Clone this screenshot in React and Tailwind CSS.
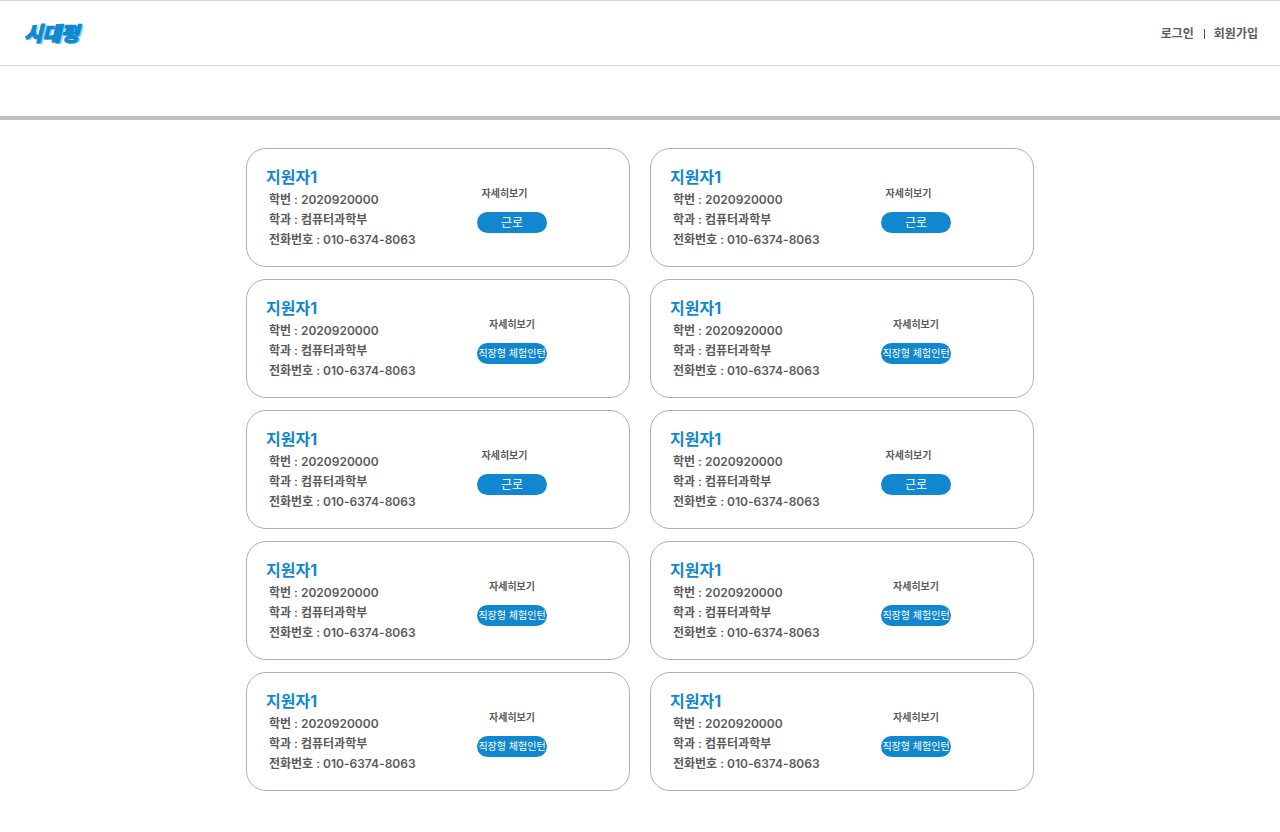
const applicants = [
  "근로",
  "근로",
  "직장형 체험인턴",
  "직장형 체험인턴",
  "근로",
  "근로",
  "직장형 체험인턴",
  "직장형 체험인턴",
  "직장형 체험인턴",
  "직장형 체험인턴",
].map((type, id) => ({
  id,
  type,
  name: "지원자1",
  studentId: "2020920000",
  major: "컴퓨터과학부",
  phone: "010-6374-8063",
}));

function Header() {
  return (
    <header className="flex h-[66px] items-center justify-between border-y border-[#d5d5d5] pt-[2px] pr-[22px] pl-6">
      <a
        href="#"
        className="text-[20px] leading-6 font-black text-[#1187cf] italic [-webkit-text-stroke:1px_#1187cf] [text-shadow:1px_1px_0_#7fd0fa,2px_1px_0_#7fd0fa]"
      >
        시대평
      </a>
      <nav className="flex items-center text-xs font-semibold">
        <a href="#">로그인</a>
        <span className="mr-[9px] ml-[10px] h-[10px] w-px bg-[#555]" />
        <a href="#">회원가입</a>
      </nav>
    </header>
  );
}

function ApplicantCard({ applicant }) {
  const short = applicant.type === "근로";
  return (
    <li className="flex rounded-[20px] border border-[#b0b0b0] py-4 pl-[19px]">
      <div className="w-[211px] shrink-0">
        <h2 className="mb-px text-base leading-6 font-bold text-[#1187cf]">{applicant.name}</h2>
        <div className="pl-[3px] text-xs leading-5 font-semibold">
          <p>학번 : {applicant.studentId}</p>
          <p>학과 : {applicant.major}</p>
          <p>전화번호 : {applicant.phone}</p>
        </div>
      </div>
      <div className="flex w-[70px] flex-col pt-5">
        <a
          href="#"
          className={`text-center text-[10px] leading-4 font-semibold ${short ? "pr-[15px]" : ""}`}
        >
          자세히보기
        </a>
        <span
          className={`mt-[11px] flex h-[21px] items-center justify-center rounded-full bg-[#1187cf] whitespace-nowrap text-white ${
            short ? "text-xs" : "text-[10px]"
          }`}
        >
          {applicant.type}
        </span>
      </div>
    </li>
  );
}

export default function App() {
  return (
    <div
      lang="ko"
      className="min-h-screen bg-white font-['Inter','Noto_Sans_CJK_KR',sans-serif] text-[#5b5b5b]"
    >
      <Header />
      <div className="h-[54px] border-b-4 border-[#bfbfbf]" />
      <main className="px-4 pt-7 pb-10">
        <ul className="mx-auto grid max-w-[788px] grid-cols-1 gap-x-5 gap-y-3 md:grid-cols-2">
          {applicants.map((applicant) => (
            <ApplicantCard key={applicant.id} applicant={applicant} />
          ))}
        </ul>
      </main>
    </div>
  );
}
